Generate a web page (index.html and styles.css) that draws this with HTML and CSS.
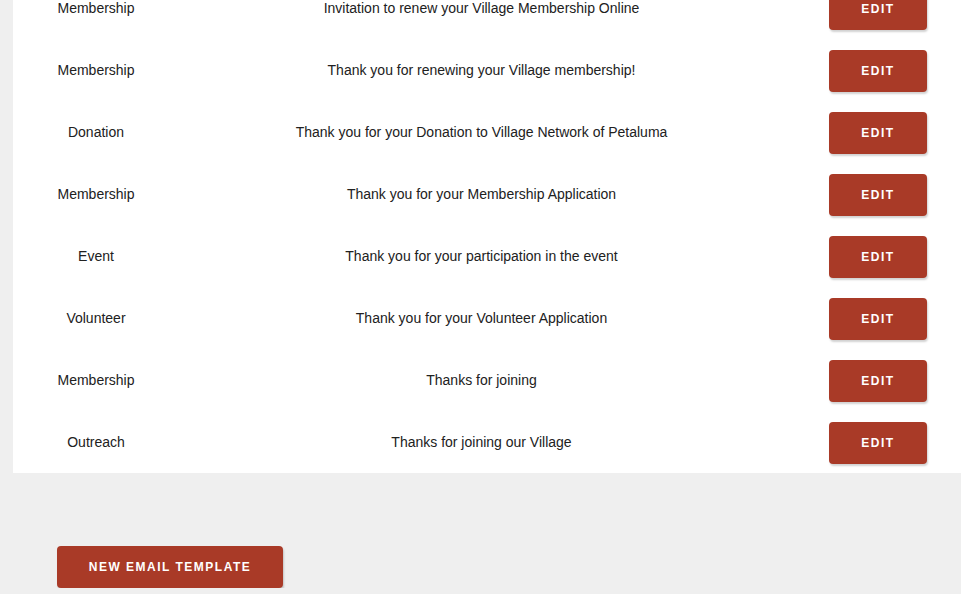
FILE: index.html
```html
<!DOCTYPE html>
<html>

<head>
    <title>Email Templates</title>
    <link rel="stylesheet" href="styles.css">
</head>

<body>
    <div class="panel">
        <div class="row">
            <div class="category">Membership</div>
            <div class="subject">Invitation to renew your Village Membership Online</div>
            <div class="action"><button class="btn">Edit</button></div>
        </div>
        <div class="row">
            <div class="category">Membership</div>
            <div class="subject">Thank you for renewing your Village membership!</div>
            <div class="action"><button class="btn">Edit</button></div>
        </div>
        <div class="row">
            <div class="category">Donation</div>
            <div class="subject">Thank you for your Donation to Village Network of Petaluma</div>
            <div class="action"><button class="btn">Edit</button></div>
        </div>
        <div class="row">
            <div class="category">Membership</div>
            <div class="subject">Thank you for your Membership Application</div>
            <div class="action"><button class="btn">Edit</button></div>
        </div>
        <div class="row">
            <div class="category">Event</div>
            <div class="subject">Thank you for your participation in the event</div>
            <div class="action"><button class="btn">Edit</button></div>
        </div>
        <div class="row">
            <div class="category">Volunteer</div>
            <div class="subject">Thank you for your Volunteer Application</div>
            <div class="action"><button class="btn">Edit</button></div>
        </div>
        <div class="row">
            <div class="category">Membership</div>
            <div class="subject">Thanks for joining</div>
            <div class="action"><button class="btn">Edit</button></div>
        </div>
        <div class="row">
            <div class="category">Outreach</div>
            <div class="subject">Thanks for joining our Village</div>
            <div class="action"><button class="btn">Edit</button></div>
        </div>
    </div>
    <div class="footer">
        <button class="btn btn-wide">New Email Template</button>
    </div>
</body>

</html>
```

FILE: styles.css
```css
:root {
    --background-color: #efefef;
    --panel-background: #fff;
    --text-color: #212121;
    --button-background: #a93a27;
}

body {
    margin: 0;
    font-family: "Liberation Sans", Arial, sans-serif;
    font-size: 14px;
    background-color: var(--background-color);
    color: var(--text-color);
    overflow: hidden;
}

.panel {
    margin: -23px 0 0 13px;
    background-color: var(--panel-background);
}

.row {
    display: grid;
    grid-template-columns: 166px 605px 1fr;
    align-items: center;
    height: 62px;
}

.category,
.subject {
    text-align: center;
}

.action {
    padding: 2px 0 0 45px;
}

.btn {
    display: block;
    height: 42px;
    width: 98px;
    padding: 0;
    border: none;
    border-radius: 4px;
    background-color: var(--button-background);
    color: #fff;
    font-family: "Liberation Sans", Arial, sans-serif;
    font-size: 12px;
    font-weight: bold;
    letter-spacing: 1.5px;
    text-transform: uppercase;
    box-shadow: 1px 2px 2px rgba(0, 0, 0, 0.18);
    cursor: pointer;
}

.footer {
    padding: 73px 0 0 57px;
}

.btn-wide {
    width: 226px;
}
```
